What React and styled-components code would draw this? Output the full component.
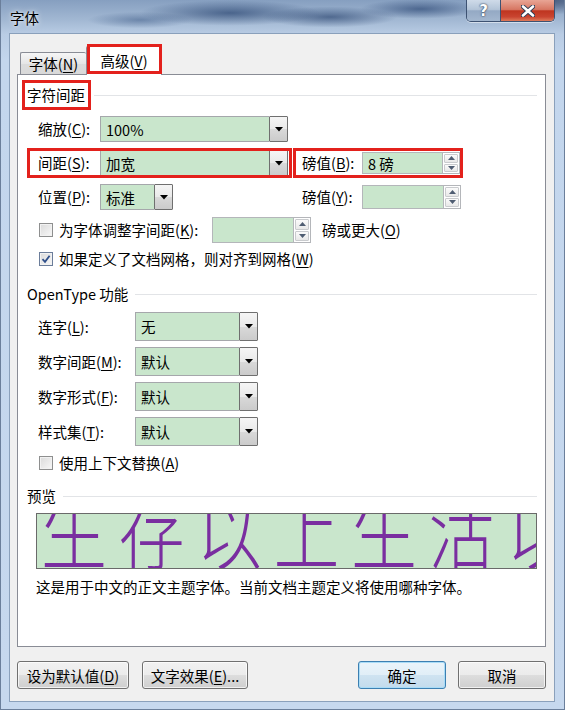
import React from 'react';
import styled, { createGlobalStyle, css } from 'styled-components';

const FONT = `"Noto Sans CJK SC", "Noto Sans", "Liberation Sans", sans-serif`;
const GREEN = '#c9e6cc';
const RED = '#e3211c';

const GlobalStyle = createGlobalStyle`
  html, body { margin: 0; padding: 0; }
  body {
    width: 565px; height: 710px; overflow: hidden;
    font-family: ${FONT}; font-size: 14.5px; color: #000;
  }
  * { box-sizing: border-box; }
`;

const Window = styled.div`
  width: 565px;
  height: 710px;
  display: flex;
  flex-direction: column;
  padding: 0 10px 8px 9px;
  background:
    radial-gradient(ellipse 120px 17px at 230px 13px, rgba(32, 60, 105, 0.65), transparent 75%),
    radial-gradient(ellipse 90px 14px at 330px 17px, rgba(28, 55, 100, 0.6), transparent 75%),
    radial-gradient(ellipse 80px 13px at 420px 9px, rgba(30, 58, 105, 0.6), transparent 75%),
    radial-gradient(ellipse 70px 11px at 140px 20px, rgba(55, 85, 130, 0.5), transparent 75%),
    radial-gradient(ellipse 100px 20px at 540px 0px, rgba(25, 40, 75, 0.65), transparent 75%),
    linear-gradient(to bottom, #869fc0 0px, #a2b8d3 20px, #b9cce4 34px, #c3d6ed 60px, #c6d8ee 100%);
  box-shadow: inset 1px 0 0 #6b7f9b, inset -1px 0 0 #6b7f9b, inset 0 -1px 0 #6b7f9b;
`;

const TitleBar = styled.div`
  height: 33px;
  flex-shrink: 0;
  display: flex;
  align-items: flex-start;
`;

const Title = styled.div`
  padding: 8px 0 0 1px;
  font-size: 14.5px;
  line-height: 20px;
  color: #000;
  text-shadow: 0 0 6px rgba(255, 255, 255, 0.85), 0 0 3px rgba(255, 255, 255, 0.7);
`;

const CaptionGroup = styled.div`
  margin-left: auto;
  display: flex;
  height: 22px;
  border: 1px solid #3d5272;
  border-top: none;
  border-radius: 0 0 5px 5px;
  overflow: hidden;
  box-shadow: 0 1px 0 rgba(255, 255, 255, 0.5);
`;

const CapBtn = styled.div`
  width: ${p => p.$w}px;
  display: flex;
  align-items: center;
  justify-content: center;
  color: #fff;
  font-family: "DejaVu Sans", sans-serif;
  font-weight: bold;
  font-size: 15px;
  text-shadow: 0 0 2px #2b3b55, 0 0 1px #2b3b55;
  background: ${p =>
    p.$close
      ? 'linear-gradient(#e8a595 0%, #d77763 45%, #bf3520 52%, #c94430 80%, #de7a5a 100%)'
      : 'linear-gradient(#cfdbe9 0%, #b3c4d8 45%, #94a9c4 52%, #a3b7cf 100%)'};
  & + & { border-left: 1px solid #3d5272; }
`;

const Client = styled.div`
  flex: 1;
  display: flex;
  flex-direction: column;
  background: #f0f0f0;
  border: 1px solid #8aa0bb;
  padding: 12px 8px 12px 7px;
`;

const TabBar = styled.div`
  display: flex;
  align-items: flex-end;
  height: 29px;
  padding-left: 3px;
  margin-bottom: -1px;
  position: relative;
  z-index: 1;
`;

const Tab = styled.div`
  position: relative;
  width: ${p => p.$w}px;
  display: flex;
  align-items: center;
  justify-content: center;
  border: 1px solid #898c95;
  border-bottom: none;
  border-radius: 2px 2px 0 0;
  white-space: nowrap;
  ${p =>
    p.$active
      ? css`
          height: 29px;
          background: #fff;
          padding-bottom: 2px;
          &::after {
            content: '';
            position: absolute;
            top: -3px; left: 0; right: -1px; bottom: 1px;
            border: 3px solid ${RED};
          }
        `
      : css`
          height: 22px;
          margin-bottom: 1px;
          background: linear-gradient(#f6f6f6, #e6e6e6 50%, #dcdcdc 51%, #d9d9d9);
          border-right: none;
        `}
`;

const Panel = styled.div`
  height: 573px;
  flex-shrink: 0;
  background: #fff;
  border: 1px solid #898c95;
  padding: 10px 8px 0 9px;
  display: flex;
  flex-direction: column;
`;

const Heading = styled.div`
  display: flex;
  align-items: center;
  height: 20px;
  margin-top: ${p => p.$mt || 0}px;
  flex-shrink: 0;
`;

const HeadText = styled.span`
  position: relative;
  line-height: 20px;
  white-space: nowrap;
  ${p =>
    p.$hl &&
    css`
      &::after {
        content: '';
        position: absolute;
        top: -5px; left: -5px; right: -6px; bottom: -5px;
        border: 3px solid ${RED};
      }
    `}
`;

const HeadLine = styled.div`
  flex: 1;
  height: 1px;
  margin-left: ${p => p.$ml || 6}px;
  background: #e2e4e7;
`;

const Row = styled.div`
  display: flex;
  align-items: center;
  height: ${p => p.$h || 26}px;
  margin-top: ${p => p.$mt || 0}px;
  padding-left: 11px;
  flex-shrink: 0;
`;

const Cell = styled.div`
  position: relative;
  display: flex;
  align-items: center;
  align-self: stretch;
  width: ${p => (p.$w ? `${p.$w}px` : 'auto')};
  margin-left: ${p => p.$ml || 0}px;
  ${p =>
    p.$hl &&
    css`
      &::after {
        content: '';
        position: absolute;
        top: ${p.$hl[0]}px; right: ${p.$hl[1]}px; bottom: ${p.$hl[2]}px; left: ${p.$hl[3]}px;
        border: 3px solid ${RED};
        pointer-events: none;
      }
    `}
`;

const Label = styled.span`
  width: ${p => (p.$w ? `${p.$w}px` : 'auto')};
  flex-shrink: 0;
  margin-left: ${p => p.$ml || 0}px;
  white-space: nowrap;
  line-height: 20px;
`;

const U = styled.span`
  text-decoration: underline;
  text-underline-offset: 2px;
  text-decoration-thickness: 1px;
`;

const ComboBox = styled.div`
  display: flex;
  width: ${p => p.$w}px;
  height: ${p => p.$h}px;
  flex-shrink: 0;
`;

const Field = styled.div`
  flex: 1;
  background: ${GREEN};
  border: 1px solid #a5a7ab;
  border-right: none;
  padding-left: 5px;
  display: flex;
  align-items: center;
  white-space: nowrap;
  overflow: hidden;
`;

const DropBtn = styled.div`
  width: 19px;
  flex-shrink: 0;
  border: 1px solid #6f6f6f;
  border-radius: 1px;
  background: linear-gradient(#f5f5f5 0%, #e9e9e9 50%, #d9d9d9 51%, #cbcbcb 100%);
  display: flex;
  align-items: center;
  justify-content: center;
`;

const SpinBox = styled.div`
  display: flex;
  width: ${p => p.$w}px;
  height: ${p => p.$h}px;
  flex-shrink: 0;
`;

const SpinField = styled.div`
  flex: 1;
  background: ${GREEN};
  border: 1px solid #b4b6ba;
  border-right: none;
  padding-left: 5px;
  display: flex;
  align-items: center;
  white-space: nowrap;
`;

const SpinCol = styled.div`
  width: 18px;
  display: flex;
  flex-direction: column;
  border: 1px solid #b4b6ba;
  background: #fff;
  padding: 1px;
  gap: 1px;
`;

const SpinBtn = styled.div`
  flex: 1;
  border: 1px solid #c9cbce;
  border-radius: 1px;
  background: linear-gradient(#fbfbfb, #e8e8e8);
  display: flex;
  align-items: center;
  justify-content: center;
`;

const CheckBox = styled.span`
  width: 14px;
  height: 14px;
  flex-shrink: 0;
  margin-left: 1px;
  border: 1px solid ${p => (p.$checked ? '#6b7d9a' : '#8e8f8f')};
  background: linear-gradient(135deg, #dadada, #f8f8f8);
  box-shadow: inset 0 0 0 1px #f2f2f2;
  display: inline-flex;
  align-items: center;
  justify-content: center;
`;

const Preview = styled.div`
  margin: 7px 0 0 9px;
  height: 56px;
  flex-shrink: 0;
  border: 1px solid #6a6a6a;
  background: ${GREEN};
  overflow: hidden;
`;

const PreviewText = styled.div`
  margin-top: -13px;
  padding-left: 4px;
  font-size: 66px;
  line-height: 1;
  font-weight: 200;
  letter-spacing: 11.5px;
  color: #7a2ea0;
  white-space: nowrap;
  transform: scaleY(1.28);
  transform-origin: 0 92%;
`;

const Caption = styled.div`
  margin: 8px 0 0 9px;
  line-height: 20px;
  white-space: nowrap;
`;

const ButtonRow = styled.div`
  display: flex;
  margin-top: 14px;
  height: 28px;
  flex-shrink: 0;
  gap: 13px;
`;

const Button = styled.div`
  width: ${p => p.$w}px;
  height: 28px;
  margin-left: ${p => (p.$push ? 'auto' : '0')};
  display: flex;
  align-items: center;
  justify-content: center;
  border: 1px solid ${p => (p.$default ? '#3c7fb1' : '#707070')};
  border-radius: 3px;
  white-space: nowrap;
  background: ${p =>
    p.$default
      ? 'linear-gradient(#eaf4fa 0%, #e1eef7 50%, #cfe3f1 51%, #c3dbec 100%)'
      : 'linear-gradient(#f2f2f2 0%, #ebebeb 50%, #dddddd 51%, #cfcfcf 100%)'};
  box-shadow: inset 0 0 0 1px ${p => (p.$default ? '#a9dcf7' : 'rgba(255,255,255,0.7)')};
  ${p => p.$default && css`margin-right: -1px;`}
`;

const Tri = () => (
  <svg width="8" height="5" viewBox="0 0 8 5">
    <polygon points="0,0 8,0 4,4.5" fill="#000" />
  </svg>
);

const SmallArrow = ({ up }) => (
  <svg width="7" height="4" viewBox="0 0 7 4">
    <polygon points={up ? '0,4 7,4 3.5,0' : '0,0 7,0 3.5,4'} fill="#4f5d72" />
  </svg>
);

const Combo = ({ w, h, children }) => (
  <ComboBox $w={w} $h={h}>
    <Field>{children}</Field>
    <DropBtn>
      <Tri />
    </DropBtn>
  </ComboBox>
);

const Spinner = ({ w, h, children }) => (
  <SpinBox $w={w} $h={h}>
    <SpinField>{children}</SpinField>
    <SpinCol>
      <SpinBtn>
        <SmallArrow up />
      </SpinBtn>
      <SpinBtn>
        <SmallArrow />
      </SpinBtn>
    </SpinCol>
  </SpinBox>
);

const Check = ({ checked }) => (
  <CheckBox $checked={checked}>
    {checked && (
      <svg width="10" height="10" viewBox="0 0 10 10">
        <path d="M1.5 5.2 L4 7.8 L8.6 1.8" fill="none" stroke="#2f4f8a" strokeWidth="1.8" />
      </svg>
    )}
  </CheckBox>
);

export default function App() {
  return (
    <>
      <GlobalStyle />
      <Window>
        <TitleBar>
          <Title>字体</Title>
          <CaptionGroup>
            <CapBtn $w={33}>?</CapBtn>
            <CapBtn $w={54} $close>
              <svg width="14" height="12" viewBox="0 0 14 12">
                <path d="M2 1.5 L12 10.5 M12 1.5 L2 10.5" stroke="#2b3b55" strokeWidth="4.4" strokeLinecap="round" />
                <path d="M2 1.5 L12 10.5 M12 1.5 L2 10.5" stroke="#fff" strokeWidth="2.6" strokeLinecap="round" />
              </svg>
            </CapBtn>
          </CaptionGroup>
        </TitleBar>
        <Client>
          <TabBar>
            <Tab $w={66}>
              字体(<U>N</U>)
            </Tab>
            <Tab $w={76} $active>
              高级(<U>V</U>)
            </Tab>
          </TabBar>
          <Panel>
            <Heading>
              <HeadText $hl>字符间距</HeadText>
              <HeadLine $ml={9} />
            </Heading>

            <Row $mt={11}>
              <Cell $w={250}>
                <Label $w={62}>
                  缩放(<U>C</U>):
                </Label>
                <Combo w={188} h={26}>100%</Combo>
              </Cell>
            </Row>

            <Row $mt={8}>
              <Cell $w={250} $hl={[-2, -4, -2, -11]}>
                <Label $w={62}>
                  间距(<U>S</U>):
                </Label>
                <Combo w={188} h={26}>加宽</Combo>
              </Cell>
              <Cell $ml={14} $hl={[-2, -3, -2, -9]}>
                <Label $w={60}>
                  磅值(<U>B</U>):
                </Label>
                <Spinner w={98} h={22}>8 磅</Spinner>
              </Cell>
            </Row>

            <Row $mt={8}>
              <Cell $w={250}>
                <Label $w={62}>
                  位置(<U>P</U>):
                </Label>
                <Combo w={73} h={26}>标准</Combo>
              </Cell>
              <Cell $ml={14}>
                <Label $w={60}>
                  磅值(<U>Y</U>):
                </Label>
                <Spinner w={99} h={24} />
              </Cell>
            </Row>

            <Row $mt={7}>
              <Check />
              <Label $w={153} $ml={6}>
                为字体调整字间距(<U>K</U>):
              </Label>
              <Spinner w={99} h={26} />
              <Label $ml={11}>
                磅或更大(<U>O</U>)
              </Label>
            </Row>

            <Row $mt={7} $h={18}>
              <Check checked />
              <Label $ml={6}>
                如果定义了文档网格，则对齐到网格(<U>W</U>)
              </Label>
            </Row>

            <Heading $mt={16}>
              <HeadText>OpenType 功能</HeadText>
              <HeadLine $ml={7} />
            </Heading>

            <Row $mt={8} $h={29}>
              <Label $w={97}>
                连字(<U>L</U>):
              </Label>
              <Combo w={123} h={29}>无</Combo>
            </Row>
            <Row $mt={6} $h={29}>
              <Label $w={97}>
                数字间距(<U>M</U>):
              </Label>
              <Combo w={123} h={29}>默认</Combo>
            </Row>
            <Row $mt={6} $h={29}>
              <Label $w={97}>
                数字形式(<U>F</U>):
              </Label>
              <Combo w={123} h={29}>默认</Combo>
            </Row>
            <Row $mt={6} $h={29}>
              <Label $w={97}>
                样式集(<U>T</U>):
              </Label>
              <Combo w={123} h={29}>默认</Combo>
            </Row>

            <Row $mt={8} $h={18}>
              <Check />
              <Label $ml={6}>
                使用上下文替换(<U>A</U>)
              </Label>
            </Row>

            <Heading $mt={14}>
              <HeadText>预览</HeadText>
              <HeadLine $ml={7} />
            </Heading>

            <Preview>
              <PreviewText>生存以上生活以上生活</PreviewText>
            </Preview>
            <Caption>这是用于中文的正文主题字体。当前文档主题定义将使用哪种字体。</Caption>
          </Panel>

          <ButtonRow>
            <Button $w={112}>
              设为默认值(<U>D</U>)
            </Button>
            <Button $w={106}>
              文字效果(<U>E</U>)...
            </Button>
            <Button $w={88} $push $default>
              确定
            </Button>
            <Button $w={88}>取消</Button>
          </ButtonRow>
        </Client>
      </Window>
    </>
  );
}
